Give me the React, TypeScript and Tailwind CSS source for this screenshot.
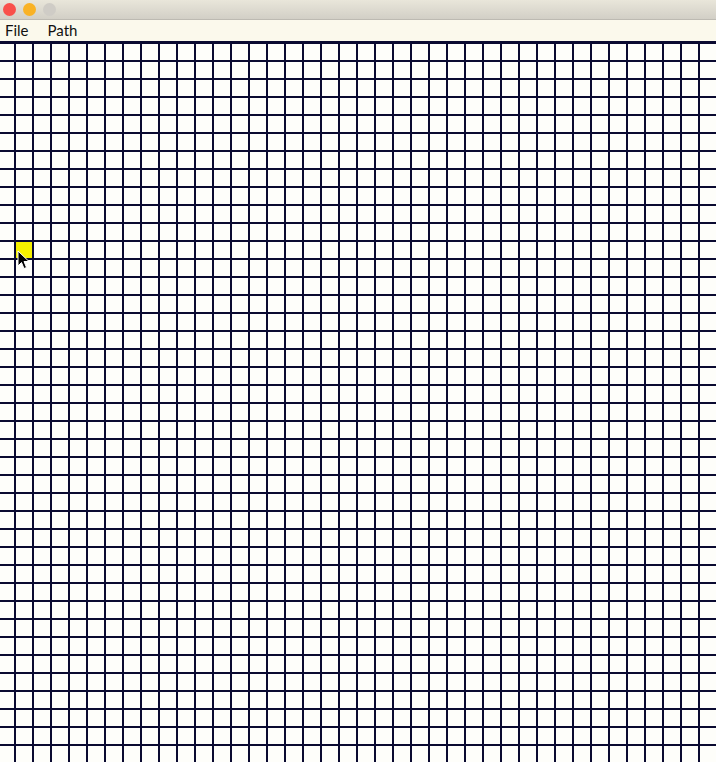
import React from "react"

const COLS = 40
const ROWS = 41
const ACTIVE = { row: 11, col: 1 }

function Cursor() {
  return (
    <svg
      className="absolute left-[17px] top-[250px]"
      width="14"
      height="20"
      viewBox="0 0 14 20"
    >
      <path
        d="M1 1 L1 16 L4.5 12.5 L7 18.5 L9.5 17.5 L7 11.5 L12 11.5 Z"
        fill="#000"
        stroke="#fff"
        strokeWidth="1"
        strokeLinejoin="round"
      />
    </svg>
  )
}

export default function App() {
  const cells = Array.from({ length: ROWS * COLS }, (_, i) => {
    const row = Math.floor(i / COLS)
    const col = i % COLS
    const active = row === ACTIVE.row && col === ACTIVE.col
    return (
      <div
        key={i}
        className={active ? "h-4 w-4 bg-[#f5f000]" : "h-4 w-4 bg-[#fefefa]"}
      />
    )
  })

  return (
    <div className="relative h-[762px] w-[716px] overflow-hidden bg-[#fefefa] font-['Lato','Liberation_Sans',sans-serif]">
      {/* Title bar */}
      <div className="flex h-5 items-center gap-[7px] border-b border-[#bdbab2] bg-gradient-to-b from-[#e9e6da] to-[#d2cfc6] pl-[3px]">
        <span className="h-[13px] w-[13px] rounded-full bg-[#f9504a]" />
        <span className="h-[13px] w-[13px] rounded-full bg-[#f9b225]" />
        <span className="h-[13px] w-[13px] rounded-full bg-[#cfccc6]" />
      </div>

      {/* Menu bar */}
      <div className="flex h-[21px] items-center gap-[19px] bg-[#fbf9ec] pl-[5px] text-[15px] text-[#111]">
        <span>File</span>
        <span>Path</span>
      </div>

      {/* Grid */}
      <div className="bg-[#0a0a30] pt-[3px]">
        <div className="-ml-[2px] grid grid-cols-[repeat(40,16px)] gap-[2px]">
          {cells}
        </div>
      </div>

      <Cursor />
    </div>
  )
}
